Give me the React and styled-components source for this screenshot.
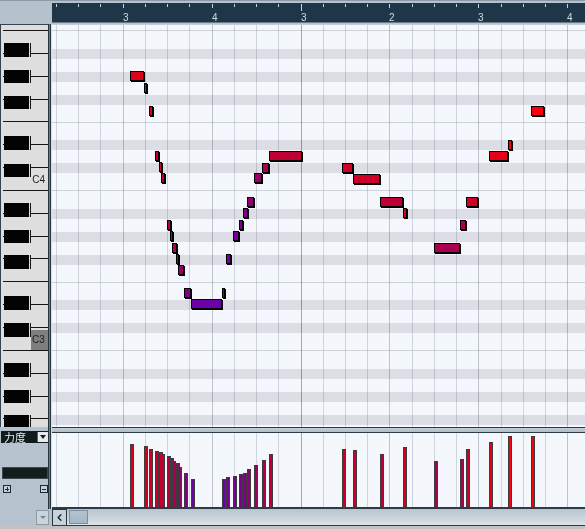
import React from 'react';
import styled, { createGlobalStyle } from 'styled-components';
import { ChevronLeft } from 'lucide-react';

const GlobalStyle = createGlobalStyle`
  html, body {
    margin: 0;
    padding: 0;
    background: #b6c3ce;
  }
  body {
    font-family: 'Liberation Sans', Arial, sans-serif;
  }
`;

// 16th-note spacing in px, and the height of one white piano key
const STEP = 22.23;
const KEY_H = 160 / 7;
const gridXs = Array.from({ length: 24 }, (_, k) => Math.round(4 + STEP * k));
const RULER_LABELS = { 3: '3', 7: '4', 11: '3', 15: '2', 19: '3', 23: '4' };

// note lanes of one octave, top (B) to bottom (C)
const OCTAVE_LANES = [
  { n: 'B', h: 18 },
  { n: 'A#', h: 10, black: true },
  { n: 'A', h: 13 },
  { n: 'G#', h: 10, black: true },
  { n: 'G', h: 13 },
  { n: 'F#', h: 10, black: true },
  { n: 'F', h: 17.5, line: true },
  { n: 'E', h: 17.5 },
  { n: 'D#', h: 10, black: true },
  { n: 'D', h: 13 },
  { n: 'C#', h: 10, black: true },
  { n: 'C', h: 18, line: true },
];
const LANES = [
  { n: 'C5', h: 6, line: true },
  ...[4, 3, 2].flatMap(o => OCTAVE_LANES.map(l => ({ ...l, n: l.n + o }))),
];

// white keys, black key offset is measured from the key's bottom edge
const OCTAVE_KEYS = [
  { n: 'B', black: -9.5 },
  { n: 'A', black: -6 },
  { n: 'G', black: -3 },
  { n: 'F' },
  { n: 'E', black: -8 },
  { n: 'D', black: -3.5 },
  { n: 'C' },
];
const KEYS = [
  { n: 'C5', h: 6 },
  ...[4, 3, 2].flatMap(o => OCTAVE_KEYS.map(k => ({ ...k, n: k.n + o, h: KEY_H }))),
];

// [x, y, width, velocity bar top] in page pixels
const NOTES = [
  [130, 71, 13, 444],
  [144, 83, 2, 446],
  [149, 106, 3, 449],
  [155, 151, 3, 451],
  [159, 162, 2, 452],
  [161, 173, 3, 454],
  [167, 220, 3, 456],
  [170, 231, 2, 458],
  [172, 243, 4, 461],
  [176, 254, 2, 463],
  [178, 265, 5, 467],
  [184, 288, 6, 473],
  [191, 299, 30, 479],
  [222, 288, 2, 479],
  [226, 254, 4, 477],
  [233, 231, 5, 476],
  [239, 220, 3, 474],
  [243, 208, 4, 473],
  [247, 197, 6, 469],
  [254, 173, 7, 465],
  [262, 163, 6, 460],
  [269, 151, 32, 454],
  [342, 163, 10, 449],
  [353, 174, 26, 450],
  [380, 197, 22, 454],
  [403, 208, 3, 447],
  [434, 243, 25, 461],
  [460, 220, 5, 459],
  [466, 197, 11, 449],
  [489, 151, 18, 442],
  [508, 140, 3, 436],
  [531, 106, 12, 436],
];

const GRID_X = 52;
const GRID_Y = 25;
const LANE_Y = 433;
const LANE_BOTTOM = 507;

const tone = top => {
  const t = Math.min(1, Math.max(0, (top - 436) / 43));
  const r = Math.round(250 - 140 * t);
  const b = Math.round(15 + 155 * Math.pow(t, 1.6));
  return `rgb(${r},0,${b})`;
};

const Editor = styled.div`
  width: 585px;
  height: 529px;
  display: grid;
  grid-template-columns: 52px 533px;
  grid-template-rows: 24px 403px 6px 76px 17px 3px;
  background: #b6c3ce;
  overflow: hidden;
`;

const Corner = styled.div`
  grid-column: 1;
  grid-row: 1;
  border-top: 1px solid #8b99a6;
  background: #b5c2cd;
`;

const RulerCell = styled.div`
  grid-column: 2;
  grid-row: 1;
  border-top: 1px solid #8b99a6;
  padding-top: 2px;
  box-sizing: border-box;
`;

const RulerBar = styled.div`
  position: relative;
  height: 20px;
  background: #1f3548;
  border-bottom: 1px solid #6b7d8c;
  box-sizing: border-box;
`;

const Tick = styled.span`
  position: absolute;
  top: 1px;
  width: 1px;
  height: ${p => (p.$bar ? 7 : p.$beat ? 4 : 3)}px;
  background: #c7d1db;
`;

const TickLabel = styled.span`
  position: absolute;
  top: 10px;
  font-size: 10px;
  line-height: 10px;
  color: #d3dbe3;
`;

const KeyboardCell = styled.div`
  grid-column: 1;
  grid-row: 2;
  display: flex;
`;

const Keyboard = styled.div`
  width: 48px;
  box-sizing: border-box;
  border-left: 1px solid #33434f;
  border-top: 1px solid #33434f;
  background: #dedede;
  display: flex;
  flex-direction: column;
  overflow: hidden;
`;

const WhiteKey = styled.div`
  position: relative;
  flex: none;
  height: ${p => p.$h}px;
  margin-left: 2px;
  box-sizing: border-box;
  border-bottom: 1px solid #161616;
`;

const BlackKey = styled.div`
  position: absolute;
  left: 1px;
  top: calc(100% + ${p => p.$off}px);
  width: 25px;
  height: 13.5px;
  background: #030303;
  box-shadow: 1px 0 0 #dcdcdc, 2px 0 0 #151515;
  z-index: 1;
`;

const KeyLabel = styled.span`
  position: absolute;
  top: 7px;
  right: 3px;
  font-size: 10px;
  line-height: 10px;
  color: #1e1e1e;
`;

const ActiveKeyLabel = styled.span`
  position: absolute;
  left: 28px;
  right: 0;
  top: 2px;
  bottom: 0;
  padding: 5px 0 0 1px;
  background: #7f7f7f;
  font-size: 10px;
  line-height: 10px;
  color: #1e1e1e;
`;

const Separator = styled.div`
  width: 4px;
  flex: none;
  background: linear-gradient(
    to right,
    #26343e 0 1px,
    #5f7f98 1px 2px,
    #26343e 2px 3px,
    #d9dfe5 3px 4px
  );
`;

const NoteGrid = styled.div`
  grid-column: 2;
  grid-row: 2;
  position: relative;
  border-top: 1px solid #c6ccd4;
  background: #f4f7fc;
  display: flex;
  flex-direction: column;
  overflow: hidden;
`;

const Lane = styled.div`
  flex: none;
  height: ${p => p.$h}px;
  background: ${p => (p.$black ? '#dcdde5' : 'transparent')};
  box-shadow: ${p => (p.$line ? 'inset 0 -1px 0 #cdd1d9' : 'none')};
`;

const LinesLayer = styled.svg`
  position: absolute;
  left: 0;
  top: 0;
  width: 100%;
  height: 100%;
  mix-blend-mode: multiply;
  pointer-events: none;
`;

const Note = styled.div`
  position: absolute;
  height: 10px;
  box-sizing: border-box;
  border: 1px solid #000;
  box-shadow: 1px 1px 0 #000;
  background: ${p => p.$color};
`;

const Splitter = styled.div`
  grid-column: 2;
  grid-row: 3;
  box-sizing: border-box;
  border-top: 1px solid #2c3b46;
  border-bottom: 1px solid #2c3b46;
  background: linear-gradient(#c3ced7, #aebbc6);
`;

const ControlPanel = styled.div`
  grid-column: 1;
  grid-row: 3 / 5;
  display: flex;
`;

const PanelBody = styled.div`
  width: 48px;
  flex: none;
  padding-top: 4px;
  display: flex;
  flex-direction: column;
  box-sizing: border-box;
`;

const LaneSelect = styled.div`
  margin-left: 1px;
  height: 12px;
  display: flex;
  align-items: center;
  justify-content: space-between;
  background: #0f1b1c;
  color: #e4e9ea;
  font-family: 'Noto Sans CJK SC', 'Noto Sans CJK JP', sans-serif;
  font-size: 11px;
  line-height: 12px;
  padding-left: 3px;
`;

const DropButton = styled.span`
  width: 10px;
  height: 10px;
  display: flex;
  align-items: center;
  justify-content: center;
  background: #e6eaee;
  border-left: 1px solid #55646e;

  &::after {
    content: '';
    border-left: 3px solid transparent;
    border-right: 3px solid transparent;
    border-top: 4px solid #1c1c1c;
  }
`;

const ValueReadout = styled.div`
  margin: 24px 0 0 2px;
  height: 12px;
  background: #131d1e;
  border: 1px solid #3a4848;
  box-sizing: border-box;
`;

const StepRow = styled.div`
  margin-top: 6px;
  padding-left: 3px;
  display: flex;
  justify-content: space-between;
`;

const StepButton = styled.span`
  position: relative;
  width: 8px;
  height: 8px;
  box-sizing: border-box;
  border: 1px solid #1b2a32;
  background: #c6d0d8;

  &::before {
    content: '';
    position: absolute;
    left: 1px;
    top: 2.5px;
    width: 4px;
    height: 1px;
    background: #1b2a32;
  }

  &::after {
    content: '';
    display: ${p => (p.$plus ? 'block' : 'none')};
    position: absolute;
    left: 2.5px;
    top: 1px;
    width: 1px;
    height: 4px;
    background: #1b2a32;
  }
`;

const VelocityLane = styled.div`
  grid-column: 2;
  grid-row: 4;
  position: relative;
  background: #f4f7fc;
  border-bottom: 2px solid #2c3b46;
  overflow: hidden;
`;

const BarsLayer = styled.svg`
  position: absolute;
  left: 0;
  top: 0;
  width: 100%;
  height: 100%;
`;

const ScrollRow = styled.div`
  grid-column: 1 / -1;
  grid-row: 5;
  display: flex;
  align-items: stretch;
`;

const ScrollSpacer = styled.div`
  width: 36px;
  flex: none;
`;

const MenuButton = styled.div`
  width: 13px;
  flex: none;
  margin: 1px 3px 1px 0;
  box-sizing: border-box;
  border: 1px solid #8d9ba6;
  background: #cbd4dc;
  display: flex;
  align-items: center;
  justify-content: center;

  &::after {
    content: '';
    border-left: 3px solid transparent;
    border-right: 3px solid transparent;
    border-top: 3px solid #76848f;
  }
`;

const Track = styled.div`
  flex: 1;
  display: flex;
  align-items: stretch;
  border-bottom: 1px solid #2c3b46;
  background: linear-gradient(#b9c5ce, #d3dbe2 80%, #dfe6eb);
`;

const ArrowButton = styled.div`
  width: 15px;
  flex: none;
  box-sizing: border-box;
  border: 1px solid #27353f;
  border-bottom: none;
  background: #c8d2da;
  display: flex;
  align-items: center;
  justify-content: center;
  color: #18242c;
`;

const Thumb = styled.div`
  width: 19px;
  flex: none;
  margin: 1px 0 1px 2px;
  box-sizing: border-box;
  border: 1px solid #7b8e9d;
  background: linear-gradient(#b3c4d1, #a4b7c6);
`;

const BottomStrip = styled.div`
  grid-column: 1 / -1;
  grid-row: 6;
  background: #c2c2c4;
`;

function GridLines() {
  return (
    <LinesLayer>
      {gridXs.map((x, k) => {
        const bar = k === 11;
        const beat = k % 4 === 3;
        return (
          <line
            key={k}
            x1={x + 0.5}
            x2={x + 0.5}
            y1="0"
            y2="100%"
            stroke={bar ? '#a8adb6' : beat ? '#c6cbd3' : '#d8dce4'}
            strokeWidth="1"
          />
        );
      })}
    </LinesLayer>
  );
}

function Ruler() {
  return (
    <RulerCell>
      <RulerBar>
        {gridXs.map((x, k) => (
          <React.Fragment key={k}>
            <Tick $bar={k === 11} $beat={k % 4 === 3} style={{ left: x }} />
            {RULER_LABELS[k] && <TickLabel style={{ left: x }}>{RULER_LABELS[k]}</TickLabel>}
          </React.Fragment>
        ))}
      </RulerBar>
    </RulerCell>
  );
}

function PianoKeys() {
  return (
    <KeyboardCell>
      <Keyboard>
        {KEYS.map(k => (
          <WhiteKey key={k.n} $h={k.h}>
            {k.black !== undefined && <BlackKey $off={k.black} />}
            {k.n === 'C4' && <KeyLabel>C4</KeyLabel>}
            {k.n === 'C3' && <ActiveKeyLabel>C3</ActiveKeyLabel>}
          </WhiteKey>
        ))}
      </Keyboard>
      <Separator />
    </KeyboardCell>
  );
}

function Notes() {
  return (
    <NoteGrid>
      {LANES.map(l => (
        <Lane key={l.n} $h={l.h} $black={l.black} $line={l.line} />
      ))}
      <GridLines />
      {NOTES.map(([x, y, w, v], i) => (
        <Note
          key={i}
          $color={tone(v)}
          style={{ left: x - GRID_X, top: y - GRID_Y, width: w + 1 }}
        />
      ))}
    </NoteGrid>
  );
}

function Velocities() {
  return (
    <VelocityLane>
      <GridLines />
      <BarsLayer>
        {NOTES.map(([x, , , v], i) => (
          <rect
            key={i}
            x={x - GRID_X + 0.5}
            y={v - LANE_Y + 0.5}
            width="3"
            height={LANE_BOTTOM - v}
            fill={tone(v)}
            stroke="#3c3c3e"
            strokeWidth="1"
          />
        ))}
      </BarsLayer>
    </VelocityLane>
  );
}

export default function App() {
  return (
    <>
      <GlobalStyle />
      <Editor>
        <Corner />
        <Ruler />
        <PianoKeys />
        <Notes />
        <Splitter />
        <ControlPanel>
          <PanelBody>
            <LaneSelect>
              力度
              <DropButton />
            </LaneSelect>
            <ValueReadout />
            <StepRow>
              <StepButton $plus />
              <StepButton />
            </StepRow>
          </PanelBody>
          <Separator />
        </ControlPanel>
        <Velocities />
        <ScrollRow>
          <ScrollSpacer />
          <MenuButton />
          <Track>
            <ArrowButton>
              <ChevronLeft size={11} strokeWidth={3} />
            </ArrowButton>
            <Thumb />
          </Track>
        </ScrollRow>
        <BottomStrip />
      </Editor>
    </>
  );
}
